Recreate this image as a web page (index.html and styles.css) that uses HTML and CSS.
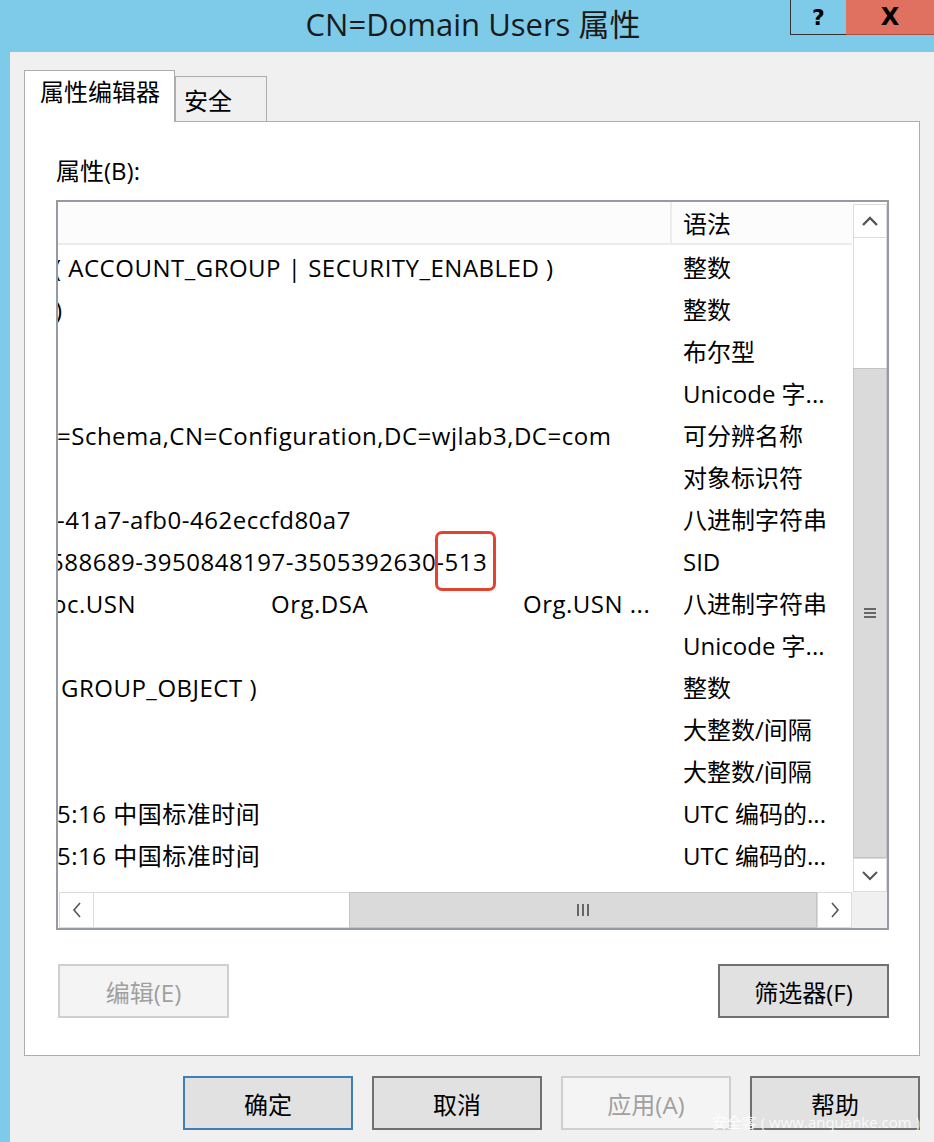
FILE: index.html
```html
<!DOCTYPE html>
<html>
<head>
    <title>CN=Domain Users 属性</title>
    <link rel="stylesheet" href="styles.css">
</head>
<body>
<div class="win">
    <div class="titlebar">
        <div class="title">CN=Domain Users 属性</div>
        <div class="cap help">?</div>
        <div class="cap close">X</div>
    </div>
    <div class="frame">
        <div class="tabs">
            <div class="tab active">属性编辑器</div>
            <div class="tab">安全</div>
        </div>
        <div class="panel">
            <div class="label">属性(B):</div>
            <div class="list">
                <div class="list-main">
                    <div class="view">
                        <div class="hdr">
                            <div class="h1"></div>
                            <div class="h2">语法</div>
                        </div>
                        <div class="row"><div class="c1"><span class="cut5">( ACCOUNT_GROUP | SECURITY_ENABLED )</span></div><div class="c2">整数</div></div>
                        <div class="row"><div class="c1"><span class="cut2">)</span></div><div class="c2">整数</div></div>
                        <div class="row"><div class="c1"></div><div class="c2">布尔型</div></div>
                        <div class="row"><div class="c1"></div><div class="c2">Unicode 字...</div></div>
                        <div class="row"><div class="c1"><span class="cut0">=Schema,CN=Configuration,DC=wjlab3,DC=com</span></div><div class="c2">可分辨名称</div></div>
                        <div class="row"><div class="c1"></div><div class="c2">对象标识符</div></div>
                        <div class="row"><div class="c1"><span class="cut0">-41a7-afb0-462eccfd80a7</span></div><div class="c2">八进制字符串</div></div>
                        <div class="row"><div class="c1"><span class="cut8">588689-3950848197-3505392630-513</span></div><div class="c2">SID</div></div>
                        <div class="row">
                            <div class="c1 multi">
                                <span class="m1"><span class="cut6">oc.USN</span></span>
                                <span class="m2">Org.DSA</span>
                                <span>Org.USN ...</span>
                            </div>
                            <div class="c2">八进制字符串</div>
                        </div>
                        <div class="row"><div class="c1"></div><div class="c2">Unicode 字...</div></div>
                        <div class="row"><div class="c1"><span class="pad3">GROUP_OBJECT )</span></div><div class="c2">整数</div></div>
                        <div class="row"><div class="c1"></div><div class="c2">大整数/间隔</div></div>
                        <div class="row"><div class="c1"></div><div class="c2">大整数/间隔</div></div>
                        <div class="row"><div class="c1"><span class="cut0">5:16 中国标准时间</span></div><div class="c2">UTC 编码的...</div></div>
                        <div class="row"><div class="c1"><span class="cut0">5:16 中国标准时间</span></div><div class="c2">UTC 编码的...</div></div>
                        <div class="mark"></div>
                    </div>
                    <div class="vscroll">
                        <div class="sbtn">
                            <svg width="18" height="12" viewBox="0 0 18 12"><path d="M2 10 L9 3 L16 10" fill="none" stroke="#555" stroke-width="2.4"/></svg>
                        </div>
                        <div class="vtrack"></div>
                        <div class="vthumb">
                            <svg width="14" height="12" viewBox="0 0 14 12"><path d="M1 2h12M1 6h12M1 10h12" stroke="#666" stroke-width="2"/></svg>
                        </div>
                        <div class="sbtn">
                            <svg width="18" height="12" viewBox="0 0 18 12"><path d="M2 3 L9 10 L16 3" fill="none" stroke="#555" stroke-width="2"/></svg>
                        </div>
                    </div>
                </div>
                <div class="hscroll-row">
                    <div class="hscroll">
                        <div class="hbtn">
                            <svg width="10" height="18" viewBox="0 0 10 18"><path d="M8 2 L2 9 L8 16" fill="none" stroke="#555" stroke-width="1.6"/></svg>
                        </div>
                        <div class="htrack"></div>
                        <div class="hthumb">
                            <svg width="14" height="14" viewBox="0 0 14 14"><path d="M2 1v12M7 1v12M12 1v12" stroke="#666" stroke-width="2"/></svg>
                        </div>
                        <div class="hbtn">
                            <svg width="10" height="18" viewBox="0 0 10 18"><path d="M2 2 L8 9 L2 16" fill="none" stroke="#555" stroke-width="1.6"/></svg>
                        </div>
                    </div>
                    <div class="corner"></div>
                </div>
            </div>
            <div class="panel-btns">
                <div class="btn disabled">编辑(E)</div>
                <div class="btn dark">筛选器(F)</div>
            </div>
        </div>
        <div class="dlg-btns">
            <div class="btn default">确定</div>
            <div class="btn dark">取消</div>
            <div class="btn disabled">应用(A)</div>
            <div class="btn dark">帮助</div>
        </div>
    </div>
    <div class="watermark">安全客 ( www.anquanke.com )</div>
</div>
</body>
</html>
```

FILE: styles.css
```css
body {
    margin: 0;
    background: #7ecbe9;
    font-family: "Open Sans", "Noto Sans CJK SC", sans-serif;
    color: #000;
}
.win {
    position: relative;
    width: 934px;
    height: 1142px;
    overflow: hidden;
    background: #7ecbe9;
}
.titlebar {
    height: 52px;
    display: flex;
    align-items: flex-start;
}
.title {
    flex: 1;
    padding-left: 156px;
    text-align: center;
    font-size: 31px;
    line-height: 48px;
    color: #1a1a1a;
}
.cap {
    height: 34px;
    display: flex;
    align-items: center;
    justify-content: center;
    font-family: "DejaVu Sans", sans-serif;
    font-weight: bold;
    font-size: 22px;
}
.help {
    width: 55px;
    border-left: 1px solid #333;
    border-bottom: 1px solid #333;
}
.close {
    width: 88px;
    background: #e0705f;
    border-bottom: 1px solid #b05040;
    font-size: 24px;
}
.frame {
    margin-left: 10px;
    height: 1090px;
    background: #f0f0f0;
    padding: 20px 14px 0 14px;
    box-sizing: border-box;
}
.tabs {
    display: flex;
    align-items: flex-end;
    height: 49px;
    position: relative;
    z-index: 1;
}
.tab {
    border: 1px solid #adadad;
    border-bottom: none;
    height: 45px;
    width: 92px;
    box-sizing: border-box;
    padding: 6px 0 0 8px;
    font-size: 24px;
    line-height: 36px;
    background: #f0f0f0;
}
.tab.active {
    background: #fff;
    height: 52px;
    margin-bottom: -1px;
    padding: 3px 0 0 15px;
    width: 151px;
}
.panel {
    background: #fff;
    border: 1px solid #adadad;
    width: 896px;
    box-sizing: border-box;
    padding: 34px 30px 37px 31px;
}
.label {
    font-size: 24px;
    line-height: 30px;
    margin-bottom: 14px;
}
.list {
    border: 2px solid #959aa3;
    width: 833px;
    box-sizing: border-box;
    background: #fff;
    font-size: 24px;
}
.list-main {
    display: flex;
    height: 690px;
}
.view {
    position: relative;
    width: 794px;
    overflow: hidden;
}
.hdr {
    display: flex;
    height: 41px;
    border-bottom: 2px solid #ececec;
    background: #fcfcfc;
    margin-bottom: 2px;
}
.h1 {
    width: 612px;
    border-right: 2px solid #ececec;
}
.h2 {
    padding-left: 11px;
    line-height: 43px;
}
.row {
    display: flex;
    height: 42px;
    line-height: 42px;
    white-space: nowrap;
}
.c1 {
    width: 614px;
    overflow: hidden;
    flex-shrink: 0;
    letter-spacing: 0.5px;
}
.c2 {
    padding-left: 11px;
}
.multi {
    display: flex;
}
.m1 {
    width: 213px;
    overflow: hidden;
}
.m2 {
    width: 252px;
}
.cut0 { margin-left: -1px; }
.cut2 { margin-left: -3px; }
.cut5 { margin-left: -4px; }
.cut6 { margin-left: -6px; }
.cut8 { margin-left: -8px; }
.pad3 { margin-left: 3px; }
.mark {
    position: absolute;
    left: 377px;
    top: 329px;
    width: 55px;
    height: 54px;
    border: 3px solid #e4432d;
    border-radius: 7px;
}
.vscroll {
    width: 34px;
    padding: 2px 0 0 0;
    display: flex;
    flex-direction: column;
    border-left: 1px solid #fff;
}
.sbtn {
    height: 32px;
    border: 1px solid #dcdcdc;
    display: flex;
    align-items: center;
    justify-content: center;
    background: #fff;
}
.vtrack {
    height: 130px;
    background: #fff;
    border-left: 1px solid #dcdcdc;
    border-right: 1px solid #dcdcdc;
}
.vthumb {
    flex: 1;
    background: #dadada;
    border: 1px solid #c4c4c4;
    display: flex;
    align-items: center;
    justify-content: center;
}
.hscroll-row {
    display: flex;
    height: 36px;
}
.hscroll {
    width: 794px;
    display: flex;
    padding-left: 1px;
    box-sizing: border-box;
}
.hbtn {
    width: 33px;
    border: 1px solid #dcdcdc;
    display: flex;
    align-items: center;
    justify-content: center;
    background: #fff;
}
.htrack {
    width: 255px;
    background: #fff;
    border-top: 1px solid #dcdcdc;
    border-bottom: 1px solid #dcdcdc;
}
.hthumb {
    flex: 1;
    background: #dadada;
    border: 1px solid #c4c4c4;
    display: flex;
    align-items: center;
    justify-content: center;
}
.corner {
    flex: 1;
    background: #f0f0f0;
}
.btn {
    width: 171px;
    height: 54px;
    box-sizing: border-box;
    display: flex;
    align-items: center;
    justify-content: center;
    font-size: 24px;
    background: #e1e1e1;
    border: 2px solid #707070;
}
.btn.disabled {
    background: #f4f4f4;
    border-color: #cfcfcf;
    color: #a0a0a0;
}
.btn.default {
    border-color: #3c7fb9;
}
.panel-btns {
    display: flex;
    justify-content: space-between;
    margin-top: 34px;
    padding-left: 2px;
}
.dlg-btns {
    display: flex;
    justify-content: flex-end;
    gap: 19px;
    margin-top: 20px;
}
.dlg-btns .btn {
    width: 170px;
}
.watermark {
    position: absolute;
    right: 14px;
    bottom: 10px;
    font-size: 15px;
    color: rgba(255, 255, 255, 0.85);
}
```
